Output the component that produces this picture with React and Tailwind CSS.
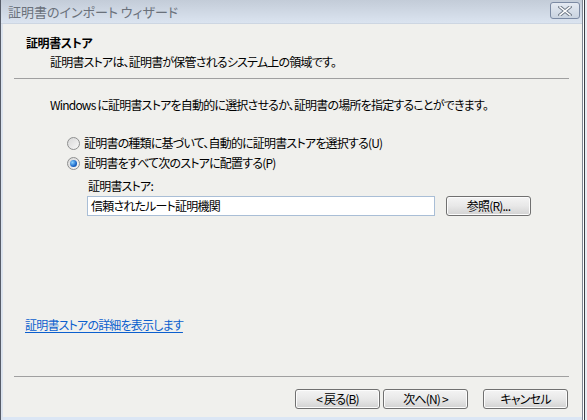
import React from 'react';

const Btn = ({ children, className = '' }) => (
    <div className={`h-[20px] w-[85px] flex items-center justify-center rounded-[3px] border border-[#707070] bg-gradient-to-b from-[#f4f4f4] via-[#e8e8e8] to-[#d2d2d2] text-[12px] leading-none text-black shadow-[inset_0_0_0_1px_#fcfcfc] ${className}`}>
        {children}
    </div>
);

const Radio = ({ checked }) => (
    <div className="w-[13px] h-[13px] rounded-full border border-[#8e8f8f] bg-gradient-to-br from-[#d8d8d8] to-[#f7f7f7] flex items-center justify-center shrink-0">
        {checked && <div className="w-[7px] h-[7px] rounded-full bg-[radial-gradient(circle_at_35%_35%,#8ad2ff,#1a67c9_60%,#0b3e8a)]" />}
    </div>
);

export default function App() {
    return (
        <div className="w-[587px] h-[420px] flex bg-white overflow-hidden font-['MS_UI_Gothic','Noto_Sans_CJK_JP',sans-serif] [font-feature-settings:'palt'] text-black">
            {/* window */}
            <div className="w-[583px] h-[420px] flex flex-col border-l border-[#565c68] border-r border-r-[#7d8591]">
                {/* title bar */}
                <div className="h-[24px] flex items-center bg-gradient-to-b from-[#c3ccd8] to-[#dbe4f0] border-b border-[#cdd6e2]">
                    <span className="pl-[7px] text-[13px] leading-none text-[#6a717b]">証明書のインポート ウィザード</span>
                    <div className="ml-auto mr-[2px] mb-[2px] w-[30px] h-[17px] rounded-[3px] border border-[#7b8aa3] bg-gradient-to-b from-[#e4eaf2] to-[#c9d3e0] flex items-center justify-center">
                        <svg width="14" height="10" viewBox="0 0 14 10">
                            <path d="M2 1 L12 9 M12 1 L2 9" stroke="#6f7a88" strokeWidth="3.4" strokeLinecap="square" />
                            <path d="M2 1 L12 9 M12 1 L2 9" stroke="#ffffff" strokeWidth="1.6" strokeLinecap="square" />
                        </svg>
                    </div>
                </div>

                {/* body */}
                <div className="flex-1 flex border-l-2 border-[#dbe3ee]">
                    <div className="flex-1 flex flex-col bg-[#f0f0ed] border-b-[3px] border-[#dbe6f4] tracking-[-0.8px]">
                        <div className="pl-[23px] mt-[11px] text-[12px] leading-[16px] font-bold tracking-[-0.4px]">証明書ストア</div>
                        <div className="pl-[47px] mt-[3px] text-[12px] leading-[16px]">証明書ストアは、証明書が保管されるシステム上の領域です。</div>
                        <div className="ml-[11px] mt-[8px] w-[555px] h-px bg-[#a0a0a0]" />

                        <div className="pl-[47px] mt-[18px] text-[12px] leading-[16px]">Windows に証明書ストアを自動的に選択させるか、証明書の場所を指定することができます。</div>

                        <div className="pl-[64px] mt-[22px] flex items-center gap-[4px] h-[16px] text-[12px]">
                            <Radio />
                            <span>証明書の種類に基づいて、自動的に証明書ストアを選択する(U)</span>
                        </div>
                        <div className="pl-[64px] mt-[4px] flex items-center gap-[4px] h-[16px] text-[12px]">
                            <Radio checked />
                            <span>証明書をすべて次のストアに配置する(P)</span>
                        </div>

                        <div className="pl-[85px] mt-[7px] text-[12px] leading-[16px]">証明書ストア:</div>
                        <div className="pl-[84px] mt-[2px] flex items-center">
                            <div className="w-[348px] h-[20px] bg-white border border-[#a9bed6] flex items-center pl-[3px] text-[12px]">信頼されたルート証明機関</div>
                            <Btn className="ml-[11px]">参照(R)...</Btn>
                        </div>

                        <div className="pl-[22px] mt-[101px] text-[12px] leading-[16px]">
                            <span className="text-[#0b5fce] underline underline-offset-2">証明書ストアの詳細を表示します</span>
                        </div>

                        <div className="ml-[11px] mt-[43px] w-[555px] h-px bg-[#a0a0a0]" />

                        <div className="mt-[12px] pl-[292px] flex items-center">
                            <Btn>&lt; 戻る(B)</Btn>
                            <Btn className="ml-[3px]">次へ(N) &gt;</Btn>
                            <Btn className="ml-[15px]">キャンセル</Btn>
                        </div>
                    </div>
                </div>
            </div>
            <div className="flex-1 flex">
                <div className="w-[1px] bg-white" />
                <div className="w-[1px] bg-[#3b3f46]" />
                <div className="flex-1 bg-[#e8ecf2]" />
            </div>
        </div>
    );
}
